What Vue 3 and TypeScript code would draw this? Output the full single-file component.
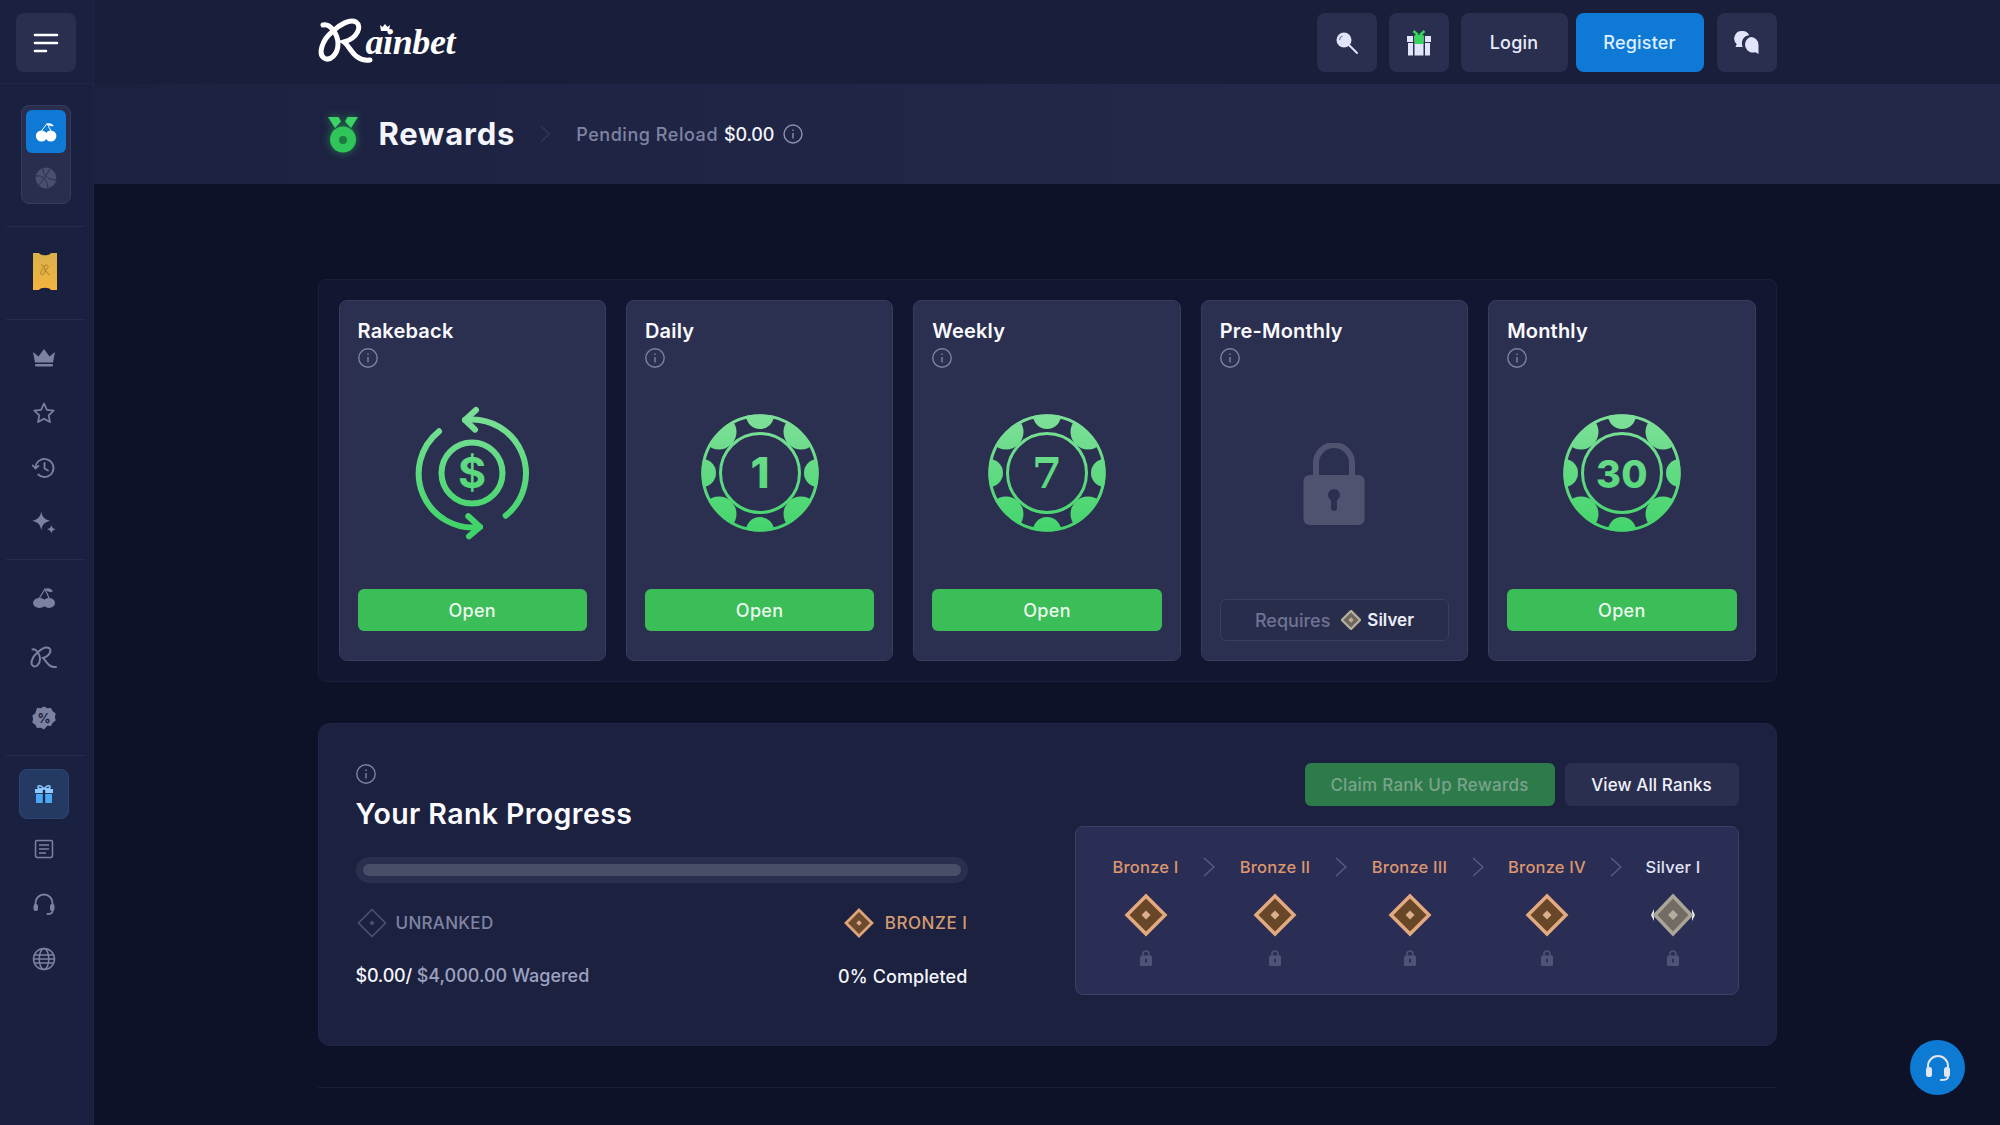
<script setup lang="ts">
interface Reward { name: string; kind: 'rakeback' | 'chip' | 'lock'; label?: string; serif?: boolean; small?: boolean }

const rewards: Reward[] = [
  { name: 'Rakeback', kind: 'rakeback' },
  { name: 'Daily', kind: 'chip', label: '1' },
  { name: 'Weekly', kind: 'chip', label: '7', serif: true },
  { name: 'Pre-Monthly', kind: 'lock' },
  { name: 'Monthly', kind: 'chip', label: '30', small: true },
]

const ranks = [
  { name: 'Bronze I', silver: false },
  { name: 'Bronze II', silver: false },
  { name: 'Bronze III', silver: false },
  { name: 'Bronze IV', silver: false },
  { name: 'Silver I', silver: true },
]

const lobes = [
  { a: 0, r: 14 }, { a: 45, r: 17.5 }, { a: 90, r: 14 }, { a: 135, r: 17.5 },
  { a: 180, r: 14 }, { a: 225, r: 17.5 }, { a: 270, r: 14 }, { a: 315, r: 17.5 },
].map((l) => ({
  r: l.r,
  x: 59 + 58 * Math.sin((l.a * Math.PI) / 180),
  y: 59 - 58 * Math.cos((l.a * Math.PI) / 180),
}))
</script>

<template>
  <div class="app">
    <svg class="defs" width="0" height="0" aria-hidden="true">
      <defs>
        <linearGradient id="greenGrad" gradientUnits="userSpaceOnUse" x1="0" y1="0" x2="0" y2="125">
          <stop offset="0" stop-color="#7fe09a" />
          <stop offset="1" stop-color="#3fd468" />
        </linearGradient>
        <clipPath id="chipClip"><circle cx="59" cy="59" r="58.500" /></clipPath>
      </defs>
    </svg>

    <aside class="sidebar">
      <div class="side-top">
        <button class="menu-btn" aria-label="Menu">
          <svg width="26" height="20" viewBox="0 0 26 20" fill="none" stroke="#fff" stroke-width="2.600" stroke-linecap="round">
            <path d="M2 2h22M2 10h22M2 18h11" />
          </svg>
        </button>
      </div>

      <div class="switcher">
        <div class="switch-item active">
          <svg width="22" height="22" viewBox="0 0 22 22">
            <circle cx="6.500" cy="15" r="5.600" fill="#fff" />
            <circle cx="15.800" cy="15" r="5.600" fill="#fff" />
            <path d="M6.500 10 L12 2.500 L16 10" fill="none" stroke="#fff" stroke-width="1" />
            <path d="M12 2.500c3-.8 5.500.2 6.800 2.600-3 .6-5.200-.3-6.800-2.600z" fill="#fff" />
          </svg>
        </div>
        <div class="switch-item second">
          <svg width="22" height="22" viewBox="0 0 22 22">
            <circle cx="11" cy="11" r="10.400" fill="#4a4f6e" />
            <path d="M1 9c6-1 11 3 12 12M8 1c-.5 6 4 12 13 12M15 2c-3 5-6 10-11 16" fill="none" stroke="#2c3050" stroke-width="1" />
          </svg>
        </div>
      </div>

      <div class="side-line first"></div>

      <div class="ticket">
        <svg width="24" height="39" viewBox="0 0 24 39">
          <defs>
            <linearGradient id="ticketGrad" x1="0" y1="0" x2="0" y2="1">
              <stop offset="0" stop-color="#d9b14a" />
              <stop offset="1" stop-color="#f5b43f" />
            </linearGradient>
          </defs>
          <path d="M0 1h6c1.500 3 10.500 3 12 0h6v37h-6c-1.500-3-10.500-3-12 0H0z" fill="url(#ticketGrad)" />
          <path d="M8 13c3 0 4 3 4 6s-3 5-4 3 3-9 5-9 4 3-1 5c2 1 3 5 5 5" fill="none" stroke="#a8802a" stroke-width="1" />
        </svg>
      </div>

      <div class="side-line"></div>

      <div class="side-group g1">
        <div class="nav-icon">
          <svg width="24" height="19" viewBox="0 0 24 19" fill="#7d81a0">
            <path d="M1 4l5.500 4.500L12 1l5.500 7.500L23 4l-2 10.500H3z" /><rect x="3" y="16" width="18" height="2.500" rx="1" />
          </svg>
        </div>
        <div class="nav-icon">
          <svg width="24" height="24" viewBox="0 0 24 24" fill="none" stroke="#7d81a0" stroke-width="1.700" stroke-linejoin="round">
            <path d="M12 2.500l2.900 6.300 6.800.8-5 4.700 1.300 6.800-6-3.400-6 3.400 1.300-6.800-5-4.700 6.800-.8z" />
          </svg>
        </div>
        <div class="nav-icon">
          <svg width="24" height="24" viewBox="0 0 24 24" fill="none" stroke="#7d81a0" stroke-width="1.800" stroke-linecap="round" stroke-linejoin="round">
            <path d="M3.500 12a9 9 0 1 1 2.800 6.500" /><path d="M.8 9.500l2.700 3 3-2.600" /><path d="M12.500 7v5.500l3.500 2" />
          </svg>
        </div>
        <div class="nav-icon">
          <svg width="27" height="27" viewBox="0 0 24 24" fill="#7d81a0">
            <path d="M10 2c.8 5 2.500 7 8 8.500C12.500 12 10.800 14 10 19c-.8-5-2.500-7-8-8.500C7.500 9 9.200 7 10 2z" />
            <path d="M19 14c.4 2.400 1.200 3.200 4 4-2.800.8-3.600 1.600-4 4-.4-2.400-1.200-3.200-4-4 2.800-.8 3.600-1.600 4-4z" />
          </svg>
        </div>
      </div>

      <div class="side-line"></div>

      <div class="side-group g2">
        <div class="nav-icon">
          <svg width="24" height="24" viewBox="0 0 24 24">
            <ellipse cx="7.500" cy="17" rx="6.500" ry="5" fill="#7d81a0" />
            <ellipse cx="17" cy="17" rx="6" ry="5" fill="#7d81a0" />
            <path d="M7.500 12L13 3l4 9" fill="none" stroke="#7d81a0" stroke-width="1.200" />
            <path d="M13 3c3-1.500 6-.5 8 2.500-3 1-6 .5-8-2.500z" fill="#7d81a0" />
          </svg>
        </div>
        <div class="nav-icon">
          <svg width="28" height="26" viewBox="0 0 56 48" fill="none" stroke="#7d81a0" stroke-width="4" stroke-linecap="round">
            <path d="M5 7c7-2 15 9 15 19s-8 18-14 14C0 36 4 22 14 14 22 6 32 1 38 4c6 4 2 16-12 20 6 4 10 20 26 18" />
          </svg>
        </div>
        <div class="nav-icon">
          <svg width="26" height="26" viewBox="0 0 26 26">
            <path d="M13 1.500l3.300 1.800 3.700-.4 1.700 3.300 3 2.200-.8 3.600.8 3.600-3 2.200-1.700 3.300-3.700-.4L13 24.500l-3.300-1.800-3.700.4-1.700-3.300-3-2.200.8-3.600-.8-3.600 3-2.200L6 2.900l3.700.4z" fill="#7d81a0" />
            <text x="13" y="18" text-anchor="middle" class="pct">%</text>
          </svg>
        </div>
      </div>

      <div class="side-line"></div>

      <div class="side-group g3">
        <div class="nav-icon selected">
          <div class="tile">
            <svg width="20" height="20" viewBox="0 0 20 20">
              <rect x="1" y="5" width="18" height="4" fill="#8fcbff" />
              <rect x="2" y="10" width="16" height="9" fill="#4aa8f5" />
              <rect x="8.800" y="5" width="2.400" height="14" fill="#1c2a50" />
              <path d="M10 5C7 1 3.500 1 4 3.500 4.300 5 7 5 10 5c3 0 5.700 0 6-1.500C16.500 1 13 1 10 5z" fill="none" stroke="#8fcbff" stroke-width="1.500" />
            </svg>
          </div>
        </div>
        <div class="nav-icon">
          <svg width="20" height="20" viewBox="0 0 20 20" fill="none" stroke="#7d81a0" stroke-width="1.500">
            <rect x="1.500" y="1.500" width="17" height="17" rx="1.500" /><path d="M5 6h10M5 10h10M5 14h7" />
          </svg>
        </div>
        <div class="nav-icon">
          <svg width="24" height="24" viewBox="0 0 24 24" fill="none" stroke="#7d81a0" stroke-width="1.800" stroke-linecap="round">
            <path d="M3.500 14v-3a8.500 8.500 0 0 1 17 0v3" />
            <rect x="1.500" y="12" width="4.500" height="7" rx="2" fill="#7d81a0" stroke="none" />
            <rect x="18" y="12" width="4.500" height="7" rx="2" fill="#7d81a0" stroke="none" />
            <path d="M20.500 19c0 2-2 3-5 3" />
          </svg>
        </div>
        <div class="nav-icon">
          <svg width="24" height="24" viewBox="0 0 24 24" fill="none" stroke="#7d81a0" stroke-width="1.500">
            <circle cx="12" cy="12" r="10.500" /><ellipse cx="12" cy="12" rx="4.800" ry="10.500" /><path d="M2.300 8h19.400M2.300 16h19.400M1.500 12h21" />
          </svg>
        </div>
      </div>
    </aside>

    <div class="main">
      <header class="topbar">
        <div class="wrap topbar-inner">
          <div class="logo">
            <svg class="logo-mark" width="56" height="48" viewBox="0 0 56 48" fill="none" stroke="#fff" stroke-width="5" stroke-linecap="round">
              <path d="M5 7c7-2 15 9 15 19s-8 18-14 14C0 36 4 22 14 14 22 6 32 1 38 4c6 4 2 16-12 20 6 4 10 20 26 18" />
            </svg>
            <span class="logo-text">ainbet</span>
            <svg class="logo-crown" width="10" height="7" viewBox="0 0 10 7" fill="#fff"><path d="M0 1l2.500 2L5 0l2.500 3L10 1 9 7H1z" /></svg>
          </div>
          <div class="top-actions">
            <button class="top-btn square" aria-label="Search">
              <svg width="24" height="24" viewBox="0 0 24 24">
                <circle cx="9" cy="9" r="7.500" fill="#e1e4fb" />
                <path d="M14.500 14.500L22 22" stroke="#e1e4fb" stroke-width="2" stroke-linecap="round" />
                <path d="M4.500 9a4.500 4.500 0 0 1 3-4" fill="none" stroke="#7d81a0" stroke-width="1.200" />
              </svg>
            </button>
            <button class="top-btn square" aria-label="Gift">
              <svg width="26" height="26" viewBox="0 0 26 26">
                <rect x="1" y="6" width="24" height="6" fill="#e1e4fb" />
                <rect x="2" y="13" width="22" height="12.500" fill="#e1e4fb" />
                <rect x="7" y="6" width="1.500" height="20" fill="#2b3050" />
                <rect x="17.500" y="6" width="1.500" height="20" fill="#2b3050" />
                <rect x="8.500" y="5" width="9" height="9" fill="#37d65f" />
                <path d="M12 5L7.500 1M14 5l4.500-4" stroke="#37d65f" stroke-width="2.400" />
              </svg>
            </button>
            <button class="top-btn login">Login</button>
            <button class="top-btn register">Register</button>
            <button class="top-btn square chat" aria-label="Chat">
              <svg width="26" height="26" viewBox="0 0 26 26" fill="#e1e4fb">
                <path d="M8.500 1a7.500 7.500 0 0 1 6.800 4.300C10.500 5.700 7.500 9.500 8 14.500c.1 1 .4 1.700.7 2.500H1.500l1.200-3A7.500 7.500 0 0 1 8.500 1z" />
                <path d="M16.500 7a8 8 0 0 1 8 8v9l-3-1.800A8 8 0 1 1 16.500 7z" />
              </svg>
            </button>
          </div>
        </div>
      </header>

      <div class="titlebar">
        <div class="wrap title-inner">
          <svg class="medal" width="30" height="37" viewBox="0 0 30 37">
            <path d="M0 1h10.500L13 5.500 7 12z" fill="#3bd465" />
            <path d="M30 1H19.500L17 5.500 23 12z" fill="#3bd465" />
            <circle cx="15" cy="23.500" r="13" fill="#2fc558" />
            <circle cx="15" cy="24" r="4" fill="#1c7a40" />
          </svg>
          <h1 class="page-title">Rewards</h1>
          <svg class="crumb" width="10" height="18" viewBox="0 0 10 18" fill="none" stroke="#30365a" stroke-width="1.500"><path d="M1 1l8 8-8 8" /></svg>
          <span class="pending">Pending Reload</span>
          <span class="pending-val">$0.00</span>
          <svg class="info" width="20" height="20" viewBox="0 0 20 20" fill="none" stroke="#8d91ae" stroke-width="1.400">
            <circle cx="10" cy="10" r="9" /><path d="M10 9v5.500M10 5.500v1.500" />
          </svg>
        </div>
      </div>

      <main class="wrap content">
        <section class="rewards-panel">
          <article v-for="r in rewards" :key="r.name" class="card">
            <h2 class="card-title">{{ r.name }}</h2>
            <svg class="info card-info" width="20" height="20" viewBox="0 0 20 20" fill="none" stroke="#7d81a3" stroke-width="1.400">
              <circle cx="10" cy="10" r="9.200" /><path d="M10 9v5.500M10 5.500v1.500" />
            </svg>
            <div class="visual">
              <svg v-if="r.kind === 'rakeback'" width="120" height="136" viewBox="0 0 120 136" fill="none" stroke="url(#greenGrad)" stroke-width="6" stroke-linecap="round" stroke-linejoin="round">
                <path d="M53 15A54 54 0 0 1 93.700 110.700" />
                <path d="M27 26.300A54 54 0 0 0 68 122" />
                <path d="M64 5L53 15l10 9.700" />
                <path d="M56.300 111.300L68 122l-11 9.300" />
                <circle cx="60" cy="68" r="30.500" />
                <text x="60" y="83" text-anchor="middle" class="dollar">$</text>
              </svg>
              <svg v-else-if="r.kind === 'chip'" width="118" height="118" viewBox="0 0 118 118" fill="none">
                <circle cx="59" cy="59" r="57.200" stroke="url(#greenGrad)" stroke-width="3" />
                <g clip-path="url(#chipClip)" fill="url(#greenGrad)">
                  <circle v-for="(l, i) in lobes" :key="i" :cx="l.x" :cy="l.y" :r="l.r" />
                </g>
                <circle cx="59" cy="59" r="39.500" stroke="url(#greenGrad)" stroke-width="3" />
                <text x="59" y="74" text-anchor="middle" fill="url(#greenGrad)" :class="['chip-num', { serif: r.serif, small: r.small }]">{{ r.label }}</text>
              </svg>
              <svg v-else class="big-lock" width="62" height="82" viewBox="0 0 62 82">
                <path d="M13 36V20a18 18 0 0 1 36 0v16" fill="none" stroke="#50536f" stroke-width="6" />
                <rect x="0.500" y="32" width="61" height="50" rx="6" fill="#50536f" />
                <circle cx="31" cy="52" r="6" fill="#2c3050" />
                <rect x="28" y="53" width="6" height="15" rx="3" fill="#2c3050" />
              </svg>
            </div>
            <div class="card-foot">
              <button v-if="r.kind !== 'lock'" class="open-btn">Open</button>
              <div v-else class="requires">
                <span class="req-label">Requires</span>
                <svg width="20" height="20" viewBox="0 0 44 44">
                  <path d="M22 2L42 22 22 42 2 22z" fill="#6c675f" stroke="#b3ad9c" stroke-width="5" />
                  <path d="M22 16l6 6-6 6-6-6z" fill="#c0a886" />
                </svg>
                <span class="req-rank">Silver</span>
              </div>
            </div>
          </article>
        </section>

        <section class="rank-panel">
          <div class="rank-left">
            <svg class="info" width="20" height="20" viewBox="0 0 20 20" fill="none" stroke="#7d81a3" stroke-width="1.400">
              <circle cx="10" cy="10" r="9.200" /><path d="M10 9v5.500M10 5.500v1.500" />
            </svg>
            <h2 class="rank-title">Your Rank Progress</h2>
            <div class="progress"><div class="progress-fill"></div></div>
            <div class="rank-ends">
              <div class="rank-end unranked">
                <svg width="30" height="30" viewBox="0 0 30 30" fill="none">
                  <path d="M15 1.500L28.500 15 15 28.500 1.500 15z" stroke="#4b5070" stroke-width="1.700" />
                  <path d="M15 12.500l2.500 2.500-2.500 2.500-2.500-2.500z" fill="#4b5070" />
                </svg>
                <span>UNRANKED</span>
              </div>
              <div class="rank-end bronze">
                <svg width="30" height="30" viewBox="0 0 44 44">
                  <path d="M22 3L41 22 22 41 3 22z" fill="#6b4a2d" stroke="#e0a47a" stroke-width="4" />
                  <path d="M22 18l4 4-4 4-4-4z" fill="#dcae8c" />
                </svg>
                <span>BRONZE I</span>
              </div>
            </div>
            <div class="rank-stats">
              <div class="wager"><span class="w-val">$0.00/</span> $4,000.00 Wagered</div>
              <div class="completed">0% Completed</div>
            </div>
          </div>

          <div class="rank-right">
            <div class="rank-btns">
              <button class="claim-btn">Claim Rank Up Rewards</button>
              <button class="view-btn">View All Ranks</button>
            </div>
            <div class="rank-box">
              <template v-for="(rank, i) in ranks" :key="rank.name">
                <div class="rank-col">
                  <div :class="['rank-name', { silver: rank.silver }]">{{ rank.name }}</div>
                  <svg class="rank-gem" width="44" height="44" viewBox="0 0 44 44">
                    <template v-if="rank.silver">
                      <path d="M3 16L0 22l3 6zM41 16l3 6-3 6z" fill="#e8e8ea" />
                      <path d="M22 3L40 22 22 41 4 22z" fill="#726c64" stroke="#aaa697" stroke-width="3.500" />
                      <path d="M22 17l5 5-5 5-5-5z" fill="#b3ad9f" />
                    </template>
                    <template v-else>
                      <path d="M22 3L41 22 22 41 3 22z" fill="#684729" stroke="#e3a97f" stroke-width="3.500" />
                      <path d="M22 17.500l4.500 4.500-4.500 4.500-4.500-4.500z" fill="#dcae8c" />
                    </template>
                  </svg>
                  <svg class="rank-lock" width="12" height="16" viewBox="0 0 12 16">
                    <path d="M3 7V4a3 3 0 0 1 6 0v3" fill="none" stroke="#4e5478" stroke-width="1.500" />
                    <rect y="5.500" width="12" height="10.500" rx="1.500" fill="#4e5478" />
                    <rect x="5" y="9" width="2" height="3.500" fill="#2a2f56" />
                  </svg>
                </div>
                <svg v-if="i < ranks.length - 1" class="rank-chevron" width="12" height="20" viewBox="0 0 12 20" fill="none" stroke="#565c84" stroke-width="1.500">
                  <path d="M1 1l10 9-10 9" />
                </svg>
              </template>
            </div>
          </div>
        </section>

        <div class="foot-line"></div>
      </main>
    </div>

    <button class="support" aria-label="Support">
      <svg width="28" height="28" viewBox="0 0 28 28" fill="none" stroke="#e4e6ee" stroke-width="2" stroke-linecap="round">
        <path d="M4 15v-3a10 10 0 0 1 20 0v3" />
        <rect x="2" y="13" width="6" height="10" rx="2.500" fill="#e4e6ee" stroke="none" />
        <rect x="20" y="13" width="6" height="10" rx="2.500" fill="#e4e6ee" stroke="none" />
        <path d="M24 23c0 2-2 3-7 3" />
      </svg>
    </button>
  </div>
</template>

<style>
html, body { margin: 0; background: #0e1229; }
</style>

<style scoped>
* { box-sizing: border-box; }
.app {
  display: flex;
  width: 2000px;
  height: 1125px;
  overflow: hidden;
  background: #0e1229;
  color: #fff;
  font-family: Inter, "Open Sans", sans-serif;
}
.defs { display: block; width: 0; height: 0; flex: none; }
button { font-family: inherit; border: 0; cursor: pointer; }
h1, h2 { margin: 0; }

/* sidebar */
.sidebar {
  flex: none;
  width: 94px;
  background: #1a2140;
  border-right: 1px solid #1e2444;
  display: flex;
  flex-direction: column;
}
.side-top { height: 84px; padding: 13px 16px; border-bottom: 1px solid #1f2647; }
.menu-btn {
  width: 60px; height: 59px; border-radius: 8px; background: #2a2f4f;
  display: flex; align-items: center; justify-content: center; padding: 0;
}
.switcher {
  margin: 21px auto 0 21px;
  width: 50px; height: 99px;
  padding: 4px;
  background: #292e4e;
  border: 1px solid #363b5c;
  border-radius: 8px;
  display: flex; flex-direction: column;
}
.switch-item { height: 43px; border-radius: 6px; display: flex; align-items: center; justify-content: center; flex: none; }
.switch-item.second { height: 46px; padding-top: 4px; }
.switch-item.active { background: #0f7ad6; }
.side-line { height: 1px; margin: 0 8px 0 6px; background: #242b4d; flex: none; }
.side-line.first { margin-top: 22px; }
.ticket { padding: 25px 0 0 33px; height: 92px; flex: none; }
.side-group { flex: none; }
.nav-icon { display: flex; align-items: center; justify-content: center; padding-right: 6px; }
.g1 { padding: 10px 0 9px; }
.g1 .nav-icon { height: 55px; }
.g2 { padding: 8px 0 7px; }
.g2 .nav-icon { height: 60px; }
.g3 { padding-top: 10px; }
.g3 .nav-icon { height: 55px; }
.tile {
  width: 50px; height: 50px; border-radius: 8px;
  background: #253a63; border: 1px solid #2d4573;
  display: flex; align-items: center; justify-content: center;
}
.pct { font: 700 13px Inter, sans-serif; fill: #1a2140; }

/* main */
.main { flex: 1; min-width: 0; display: flex; flex-direction: column; }
.wrap { width: 1459px; margin: 0 auto; }
.topbar { height: 84px; background: #191e3b; flex: none; }
.topbar-inner { height: 100%; display: flex; align-items: flex-start; justify-content: space-between; }
.logo { position: relative; display: flex; align-items: flex-start; padding-top: 18px; }
.logo-mark { flex: none; }
.logo-text {
  margin: 5px 0 0 -8px;
  font: italic 700 36px/38px "Liberation Serif", serif;
  letter-spacing: -0.4px;
  color: #fff;
}
.logo-crown { position: absolute; left: 62px; top: 24px; }
.top-actions { display: flex; padding-top: 13px; }
.top-btn {
  height: 59px; border-radius: 8px; background: #2a2f4f; color: #e8eafc;
  font-size: 18px; font-weight: 500; letter-spacing: 0.2px;
  display: flex; align-items: center; justify-content: center; padding: 0;
  margin-left: 12px;
}
.square { width: 60px; }
.login { width: 107px; }
.register { width: 128px; background: #0f7ad6; margin-left: 8px; color: #dff0ff; }
.chat { margin-left: 13px; }

.titlebar {
  height: 100px; flex: none;
  background: linear-gradient(90deg, #1c2140 0%, #222848 60%, #222848 100%);
}
.title-inner { height: 100%; display: flex; align-items: center; padding-left: 10px; }
.medal { filter: drop-shadow(0 0 4px rgba(47, 197, 88, 0.55)); flex: none; }
.page-title { margin-left: 21px; font-size: 31px; font-weight: 700; letter-spacing: 0.8px; line-height: 40px; color: #f4f5fb; }
.crumb { margin-left: 25px; flex: none; }
.pending { margin-left: 26px; font-size: 18px; font-weight: 500; color: #7f84a3; letter-spacing: 0.55px; }
.pending-val { margin-left: 6px; font-size: 18px; font-weight: 500; color: #f3f4fa; letter-spacing: -0.2px; }
.info { display: block; flex: none; }
.title-inner .info { margin-left: 9px; }

.content { padding-top: 95px; }
.rewards-panel {
  display: flex; gap: 20px;
  padding: 20px;
  height: 403px;
  background: #121631;
  border: 1px solid #191e3a;
  border-radius: 8px;
}
.card {
  flex: 1 1 0; min-width: 0; height: 361px;
  background: #2c3050;
  border: 1px solid #383d5d;
  border-radius: 8px;
  padding: 18px 18px 0;
  display: flex; flex-direction: column;
}
.card-title { font-size: 20px; line-height: 24px; font-weight: 600; color: #fafafe; letter-spacing: 0.2px; }
.card-info { margin-top: 5px; }
.visual { flex: 1; min-height: 0; display: flex; align-items: center; justify-content: center; padding-bottom: 11px; }
.big-lock { margin-top: 21px; }
.dollar { font: 700 43px Inter, sans-serif; fill: url(#greenGrad); stroke: none; }
.chip-num { font: 800 43px Inter, sans-serif; }
.chip-num.serif { font: 700 43px "DejaVu Serif", serif; }
.chip-num.small { font: 800 38px Inter, sans-serif; letter-spacing: 0.5px; }
.card-foot { height: 71px; flex: none; }
.open-btn {
  width: 100%; height: 42px; border-radius: 6px; background: #3bbd58; color: #eaf8ed;
  font-size: 18px; font-weight: 500; letter-spacing: 0.3px; padding: 0; display: block;
}
.requires {
  margin-top: 10px; height: 42px;
  border: 1px solid #3a3f60; border-radius: 6px; background: #292d4c;
  display: flex; align-items: center; justify-content: center;
  font-size: 18px;
}
.req-label { color: #6f7394; font-weight: 500; margin-right: 11px; }
.req-rank { color: #eceef8; font-weight: 600; margin-left: 6px; font-size: 17px; }

.rank-panel {
  margin-top: 41px;
  height: 323px;
  background: #1c2140;
  border: 1px solid #20264a;
  border-radius: 12px;
  padding: 39px 37px 0;
  display: flex; justify-content: space-between; align-items: flex-start;
}
.rank-left { width: 612px; padding-top: 1px; }
.rank-title { margin-top: 13px; font-size: 28.500px; line-height: 34px; font-weight: 600; letter-spacing: 0.4px; color: #fbfbff; }
.progress {
  margin-top: 26px; height: 26px; padding: 7px 7px; border-radius: 13px; background: #2a2f4d;
}
.progress-fill { height: 12px; border-radius: 6px; background: #484d68; }
.rank-ends { margin-top: 25px; height: 30px; display: flex; justify-content: space-between; align-items: center; }
.rank-end { display: flex; align-items: center; font-size: 17px; font-weight: 500; letter-spacing: 0.3px; }
.rank-end svg { display: block; }
.unranked { color: #7f84a3; gap: 9px; padding-left: 1px; }
.bronze { color: #d49a72; gap: 11px; letter-spacing: 0.55px; }
.rank-stats { margin-top: 26px; display: flex; justify-content: space-between; font-size: 18px; line-height: 24px; font-weight: 500; }
.wager { color: #9da1c0; }
.w-val { color: #f4f5fb; letter-spacing: -0.2px; }
.completed { color: #f4f5fb; margin-top: 1px; letter-spacing: 0.1px; }

.rank-right { width: 664px; }
.rank-btns { display: flex; justify-content: flex-end; gap: 10px; }
.claim-btn, .view-btn { height: 43px; border-radius: 6px; font-size: 17px; font-weight: 500; padding: 0; letter-spacing: 0.1px; }
.claim-btn { width: 250px; background: #2d7a4b; color: #79a48a; letter-spacing: 0.25px; }
.view-btn { width: 174px; background: #2a2f4f; color: #f0f1fa; }
.rank-box {
  margin-top: 20px; height: 169px;
  background: #2a2e54;
  border: 1px solid #3a4069;
  border-radius: 8px;
  padding: 28px 37px 0 36px;
  display: grid;
  grid-template-columns: 68px 12px 74px 12px 78px 12px 80px 12px 55px;
  justify-content: space-between;
  align-items: start;
}
.rank-col { display: flex; flex-direction: column; align-items: center; }
.rank-name { line-height: 24px; white-space: nowrap; font-size: 16.500px; font-weight: 500; color: #dd9670; letter-spacing: 0.2px; }
.rank-name.silver { color: #e0e3f4; }
.rank-gem { display: block; margin-top: 14px; }
.rank-lock { display: block; margin-top: 13px; }
.rank-chevron { display: block; margin-top: 2px; }
.foot-line { margin-top: 41px; height: 1px; background: #191e38; }

.support {
  position: fixed; left: 1910px; top: 1040px;
  width: 55px; height: 55px; border-radius: 50%;
  background: #0d7bd4; padding: 0;
  display: flex; align-items: center; justify-content: center;
}
</style>
